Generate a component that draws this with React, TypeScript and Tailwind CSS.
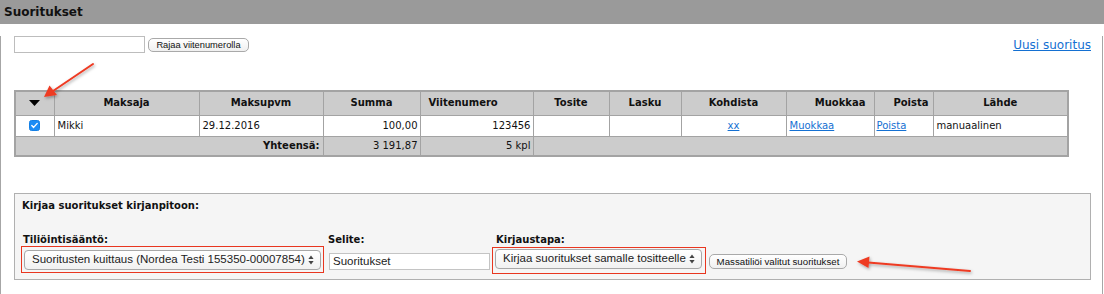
import React from "react";

function SelectArrows() {
  return (
    <svg width="6" height="10" viewBox="0 0 6 10" className="shrink-0">
      <path d="M3 0.5 L5.6 4 L0.4 4 Z" fill="#444" />
      <path d="M3 9.5 L5.6 6 L0.4 6 Z" fill="#444" />
    </svg>
  );
}

function FakeSelect({ text, width }: { text: string; width: string }) {
  return (
    <div
      className={`${width} h-[20px] flex items-center justify-between rounded-[4px] border border-[#a8a8a8] bg-gradient-to-b from-[#ffffff] to-[#f1f1f1] pl-[7px] pr-[6px] font-['Liberation_Sans',sans-serif] text-[11.5px] text-[#222] whitespace-nowrap`}
    >
      <span>{text}</span>
      <SelectArrows />
    </div>
  );
}

export default function App() {
  const th =
    "border border-[#a3a3a3] font-bold text-[10px] leading-[12px] text-[#111] px-[3px]";
  const td = "border border-[#a3a3a3] text-[10px] leading-[12px] text-[#111] px-[3px]";
  const link = "text-[#1470d2] underline";
  return (
    <div className="relative w-[1104px] h-[294px] bg-white font-['DejaVu_Sans',sans-serif] overflow-hidden">
      {/* Header */}
      <div className="h-[24px] w-[1104px] bg-[#9a9a9a] pl-[4px] text-[12px] leading-[24px] font-bold text-[#111]">
        Suoritukset
      </div>
      {/* Body frame */}
      <div className="w-[1103px] h-[268px] border-l border-r border-b border-[#a6a6a6] pl-[13px] pr-[11px]">
        {/* Filter row */}
        <div className="mt-[12px] h-[17px] flex items-center justify-between">
          <div className="flex items-center">
            <div className="w-[131px] h-[17px] border border-[#bdbdbd] bg-white" />
            <button className="ml-[3px] w-[101px] h-[14px] rounded-[5px] border border-[#a9a9a9] bg-gradient-to-b from-[#ffffff] to-[#f0f0f0] font-['Liberation_Sans',sans-serif] text-[9.3px] leading-[12px] text-[#111] flex items-center justify-center">
              Rajaa viitenumerolla
            </button>
          </div>
          <a className={`${link} text-[12px] leading-[14px] text-[#0d76d4]`}>Uusi suoritus</a>
        </div>

        {/* Table */}
        <table className="mt-[37px] w-[1053px] table-fixed border-collapse border-2 border-[#a3a3a3]">
          <colgroup>
            <col className="w-[39px]" />
            <col className="w-[145px]" />
            <col className="w-[124px]" />
            <col className="w-[97px]" />
            <col className="w-[113px]" />
            <col className="w-[76px]" />
            <col className="w-[72px]" />
            <col className="w-[105px]" />
            <col className="w-[88px]" />
            <col className="w-[59px]" />
            <col className="w-[135px]" />
          </colgroup>
          <thead>
            <tr className="h-[24px] bg-[#cccccc]">
              <th className={`${th} text-center`}>
                <svg width="11" height="6" viewBox="0 0 11 6" className="inline-block align-middle">
                  <path d="M0 0 L11 0 L5.5 6 Z" fill="#000" />
                </svg>
              </th>
              <th className={`${th} text-center`}>Maksaja</th>
              <th className={`${th} text-center`}>Maksupvm</th>
              <th className={`${th} text-center`}>Summa</th>
              <th className={`${th} text-left pl-[8px]`}>Viitenumero</th>
              <th className={`${th} text-center`}>Tosite</th>
              <th className={`${th} text-center`}>Lasku</th>
              <th className={`${th} text-center`}>Kohdista</th>
              <th className={`${th} text-right pr-[8px]`}>Muokkaa</th>
              <th className={`${th} text-right pr-[4px]`}>Poista</th>
              <th className={`${th} text-center`}>Lähde</th>
            </tr>
          </thead>
          <tbody>
            <tr className="h-[21px] bg-white">
              <td className={`${td} text-center`}>
                <svg width="11" height="11" viewBox="0 0 11 11" className="inline-block align-middle">
                  <rect x="0.5" y="0.5" width="10" height="10" rx="2" fill="#1b8cf5" stroke="#1480e6" />
                  <path d="M2.8 5.6 L4.6 7.4 L8.2 3.4" fill="none" stroke="#fff" strokeWidth="1.4" strokeLinecap="round" strokeLinejoin="round" />
                </svg>
              </td>
              <td className={`${td} text-left`}>Mikki</td>
              <td className={`${td} text-left`}>29.12.2016</td>
              <td className={`${td} text-right pr-[2px]`}>100,00</td>
              <td className={`${td} text-right pr-[2px]`}>123456</td>
              <td className={td}></td>
              <td className={td}></td>
              <td className={`${td} text-center`}>
                <a className={link}>xx</a>
              </td>
              <td className={`${td} text-left`}>
                <a className={link}>Muokkaa</a>
              </td>
              <td className={`${td} text-left pl-[2px]`}>
                <a className={link}>Poista</a>
              </td>
              <td className={`${td} text-left`}>manuaalinen</td>
            </tr>
            <tr className="h-[20px] bg-[#cccccc]">
              <td colSpan={3} className={`${td} text-right font-bold pr-[3px]`}>
                Yhteensä:
              </td>
              <td className={`${td} text-right pr-[2px]`}>3 191,87</td>
              <td className={`${td} text-right pr-[2px]`}>5 kpl</td>
              <td colSpan={6} className={td}></td>
            </tr>
          </tbody>
        </table>

        {/* Bottom panel */}
        <div className="mt-[36px] w-[1077px] h-[87px] border border-[#b0b0b0] bg-[#f5f5f5] pt-[6px] pl-[6px]">
          <div className="h-[12px] pl-[1px] text-[10px] leading-[12px] font-bold text-[#111]">
            Kirjaa suoritukset kirjanpitoon:
          </div>
          <div className="mt-[22px] flex items-start">
            <div className="flex flex-col w-[303px]">
              <div className="h-[12px] pl-[2px] text-[10px] leading-[12px] font-bold text-[#111]">
                Tiliöintisääntö:
              </div>
              <div className="border-[1.5px] border-[#e8361f] px-[2px] py-[2.5px]">
                <FakeSelect text="Suoritusten kuittaus (Nordea Testi 155350-00007854)" width="w-[297px]" />
              </div>
            </div>
            <div className="ml-[4px] flex flex-col">
              <div className="h-[12px] text-[10px] leading-[12px] font-bold text-[#111]">Selite:</div>
              <div className="mt-[7px] ml-[1px] w-[161px] h-[17px] border border-[#c4c4c4] bg-white pl-[3px] font-['Liberation_Sans',sans-serif] text-[11.5px] leading-[15px] text-[#222]">
                Suoritukset
              </div>
            </div>
            <div className="ml-[2px] flex flex-col w-[214px]">
              <div className="h-[12px] pl-[4px] text-[10px] leading-[12px] font-bold text-[#111]">
                Kirjaustapa:
              </div>
              <div className="mt-[1px] border-[1.5px] border-[#e8361f] px-[2px] pt-[1px] pb-[3.5px]">
                <FakeSelect text="Kirjaa suoritukset samalle tositteelle" width="w-[207px]" />
              </div>
            </div>
            <button className="ml-[3px] mt-[20px] w-[138px] h-[15px] rounded-[5px] border border-[#a9a9a9] bg-gradient-to-b from-[#ffffff] to-[#f0f0f0] font-['Liberation_Sans',sans-serif] text-[9.7px] leading-[12px] text-[#111] flex items-center justify-center">
              Massatiliöi valitut suoritukset
            </button>
          </div>
        </div>
      </div>

      {/* Annotation arrows */}
      <svg className="absolute left-0 top-0 pointer-events-none" width="1104" height="294" viewBox="0 0 1104 294">
        <defs>
          <filter id="sh" x="-20%" y="-20%" width="140%" height="140%">
            <feDropShadow dx="1" dy="1.5" stdDeviation="1.5" floodColor="#000" floodOpacity="0.35" />
          </filter>
        </defs>
        <g filter="url(#sh)">
          <line x1="93" y1="64" x2="53" y2="91" stroke="#ee3b24" strokeWidth="2" strokeLinecap="round" />
          <path d="M44 97 L49.5 85.5 L57 95 Z" fill="#ee3b24" />
          <line x1="970" y1="271" x2="868" y2="262.5" stroke="#ee3b24" strokeWidth="2" strokeLinecap="round" />
          <path d="M857 261.5 L869.5 256.5 L868.5 268 Z" fill="#ee3b24" />
        </g>
      </svg>
    </div>
  );
}
